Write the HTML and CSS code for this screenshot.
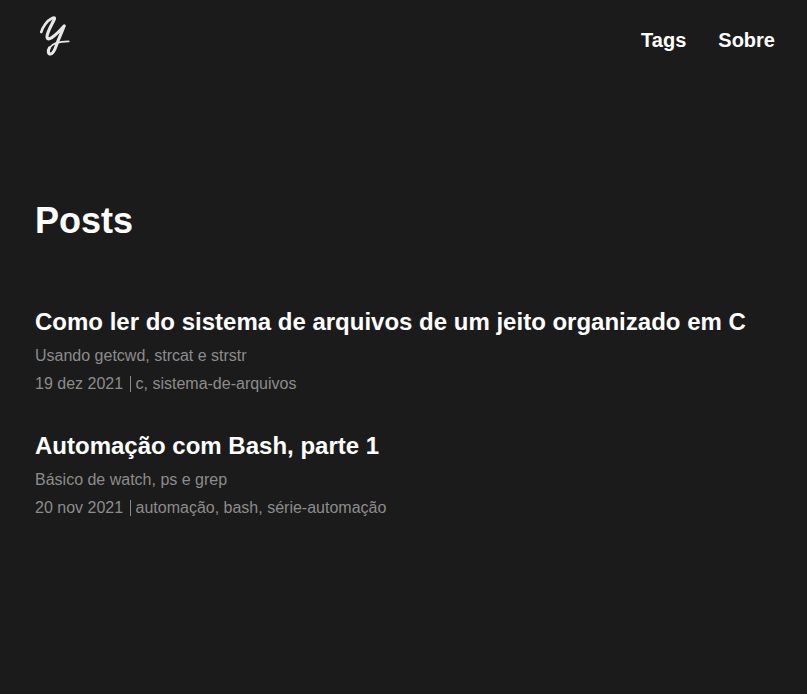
FILE: index.html
```html
<!DOCTYPE html>
<html lang="pt-BR">
<head>
<meta charset="utf-8">
<title>Posts</title>
<link rel="stylesheet" href="styles.css">
</head>
<body>
<header class="header">
  <a class="logo" aria-label="Y">
    <svg viewBox="0 0 50 60" width="50" height="60"><path class="mid" d="M11.3 26C12.5 21.5 17 14.5 22 12.2Q24.5 11 24.7 12.5"/><path d="M24.5 12.5C23.5 16 17.2 25.5 17 30.5C17 36 24 31.5 34.3 19.8C32 26 28.5 33 26.5 39C24.5 45 22.5 48 20.4 48C18 48 17.8 44.5 19.4 42"/><path class="thin" d="M19.4 42C22 37.5 28 35.4 38.6 35.4"/></svg>
  </a>
  <nav class="nav"><a>Tags</a><a>Sobre</a></nav>
</header>
<main class="main">
  <h1 class="title">Posts</h1>
  <article class="post">
    <h2 class="post-title">Como ler do sistema de arquivos de um jeito organizado em C</h2>
    <p class="line">Usando getcwd, strcat e strstr</p>
    <p class="line meta"><span class="date">19 dez 2021</span><span class="tags">c, sistema-de-arquivos</span></p>
  </article>
  <article class="post">
    <h2 class="post-title">Automação com Bash, parte 1</h2>
    <p class="line">Básico de watch, ps e grep</p>
    <p class="line meta"><span class="date">20 nov 2021</span><span class="tags">automação, bash, série-automação</span></p>
  </article>
</main>
</body>
</html>
```
FILE: styles.css
```css
* { box-sizing: border-box; margin: 0; padding: 0; }
body { background: #1b1b1b; color: #fff; font-family: "Liberation Sans", Arial, sans-serif; }
.header { display: flex; justify-content: space-between; height: 80px; padding: 6px 32px 0 30px; }
.logo svg { display: block; fill: none; stroke: #e8e8e8; stroke-width: 3.1; stroke-linecap: round; stroke-linejoin: round; filter: blur(0.35px); }
.logo .mid { stroke-width: 2.7; }
.logo .thin { stroke-width: 1.9; }
.nav { display: flex; gap: 32px; padding-top: 22px; font-size: 20px; font-weight: 700; line-height: 24px; }
.main { padding: 121px 35px 0; }
.title { font-size: 36px; line-height: 40px; margin-bottom: 63px; }
.post { margin-bottom: 30px; }
.post-title { font-size: 24px; line-height: 36px; margin-bottom: 2px; white-space: nowrap; }
.line { font-size: 16px; line-height: 28px; color: #8c8c8c; }
.meta { display: flex; align-items: center; }
.tags { margin-left: 7px; padding-left: 4.45px; border-left: 1px solid #8c8c8c; line-height: 16px; }
```
